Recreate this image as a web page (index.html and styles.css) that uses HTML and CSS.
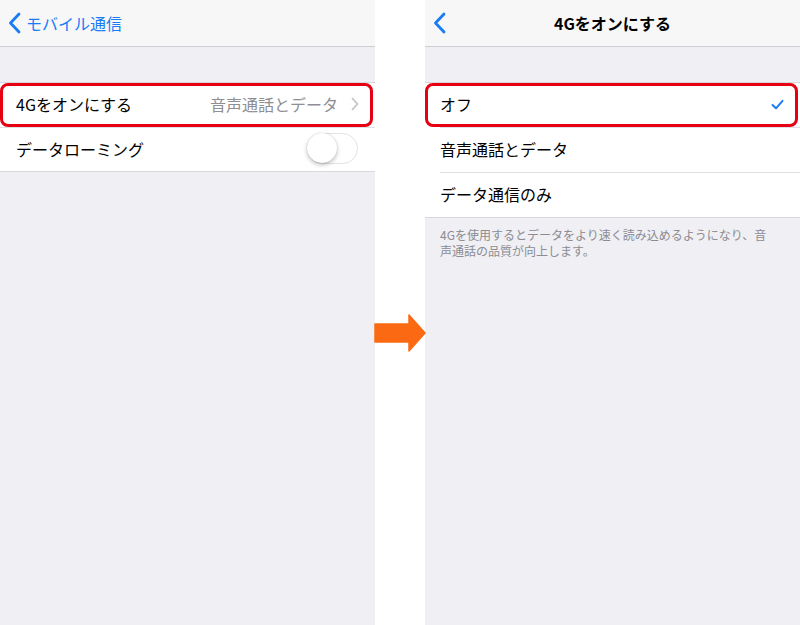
FILE: index.html
```html
<!DOCTYPE html>
<html lang="ja">
<head>
<meta charset="utf-8">
<link rel="stylesheet" href="styles.css">
</head>
<body>
<div class="stage">
  <section class="panel">
    <header class="nav">
      <div class="back">
        <svg class="back-chev" width="13" height="22" viewBox="0 0 13 22"><path d="M11 2 L2.5 11 L11 20" fill="none" stroke="#1a7cf4" stroke-width="2.8" stroke-linecap="round" stroke-linejoin="round"/></svg>
        <span>モバイル通信</span>
      </div>
    </header>
    <div class="group">
      <div class="row hl">
        <span class="label">4Gをオンにする</span>
        <span class="detail">音声通話とデータ</span>
        <svg class="chev" width="8" height="14" viewBox="0 0 8 14"><path d="M1.5 1.5 L6.5 7 L1.5 12.5" fill="none" stroke="#c4c4c9" stroke-width="1.8" stroke-linecap="round" stroke-linejoin="round"/></svg>
      </div>
      <div class="row">
        <span class="label">データローミング</span>
        <span class="toggle"><span class="knob"></span></span>
      </div>
    </div>
  </section>
  <div class="spacer"></div>
  <section class="panel">
    <header class="nav">
      <svg class="back-chev solo" width="13" height="22" viewBox="0 0 13 22"><path d="M11 2 L2.5 11 L11 20" fill="none" stroke="#1a7cf4" stroke-width="2.8" stroke-linecap="round" stroke-linejoin="round"/></svg>
      <h1 class="title">4Gをオンにする</h1>
    </header>
    <div class="group">
      <div class="row hl inset">
        <span class="label">オフ</span>
        <svg class="check" width="13" height="11" viewBox="0 0 13 11"><path d="M1.5 6 L5 9.3 L11.5 1.8" fill="none" stroke="#1a7cf4" stroke-width="2" stroke-linecap="round" stroke-linejoin="round"/></svg>
      </div>
      <div class="row inset sep">
        <span class="label">音声通話とデータ</span>
      </div>
      <div class="row inset sep">
        <span class="label">データ通信のみ</span>
      </div>
    </div>
    <p class="footer">4Gを使用するとデータをより速く読み込めるようになり、音声通話の品質が向上します。</p>
  </section>
  <svg class="arrow" width="52" height="40" viewBox="0 0 52 40"><path d="M1 11 H35 V2 L51 20 L35 38 V29 H1 Z" fill="#fb6a12" stroke="#fb6a12" stroke-width="1.5" stroke-linejoin="round"/></svg>
</div>
</body>
</html>
```
FILE: styles.css
```css
* { box-sizing: border-box; margin: 0; padding: 0; }
html, body { background: #fff; }
body {
  font-family: "Noto Sans CJK JP", "Noto Sans", sans-serif;
  color: #000;
}
.stage {
  position: relative;
  width: 800px;
  height: 625px;
  display: flex;
  overflow: hidden;
}
.panel {
  width: 375px;
  height: 625px;
  background: #efeff4;
  display: flex;
  flex-direction: column;
}
.spacer { width: 50px; background: #fff; }
.nav {
  position: relative;
  height: 47px;
  background: #f7f7f8;
  border-bottom: 1px solid #cfcfd3;
  display: flex;
  align-items: center;
  padding-left: 8px;
}
.back {
  display: flex;
  align-items: center;
  gap: 5px;
  color: #1a7cf4;
  font-size: 16px;
}
.back-chev { flex: none; }
.title {
  position: absolute;
  left: 0;
  right: 0;
  text-align: center;
  font-size: 16px;
  font-weight: 700;
}
.group {
  margin-top: 35px;
  background: #fff;
  border-top: 1px solid #d8d8dc;
  border-bottom: 1px solid #d8d8dc;
}
.row {
  position: relative;
  height: 44px;
  display: flex;
  align-items: center;
  padding: 0 16px 2px;
  font-size: 16px;
}
.row + .row { border-top: 1px solid #e0e0e4; }
.row.inset { padding-left: 15px; }
.row.sep { border-top: none; height: 45px; }
.row.sep::before {
  content: "";
  position: absolute;
  left: 15px;
  right: 0;
  top: 0;
  height: 1px;
  background: #e0e0e4;
}
.label { flex: 1; }
.detail { color: #8e8e93; margin-right: 13px; }
.chev { flex: none; }
.check { flex: none; }
.hl::after {
  content: "";
  position: absolute;
  inset: 0 2px 0 0;
  border: 3px solid #e60012;
  border-radius: 8px;
}
.toggle {
  position: relative;
  width: 51px;
  height: 31px;
  border-radius: 16px;
  border: 1.5px solid #e3e3e7;
  background: #fff;
  margin-right: 1px;
}
.knob {
  position: absolute;
  left: -1px;
  top: -1px;
  width: 30px;
  height: 30px;
  border-radius: 50%;
  background: #fff;
  box-shadow: 0 2px 4px rgba(0,0,0,0.25), 0 0 1px rgba(0,0,0,0.2);
}
.footer {
  padding: 9px 24px 0 15px;
  font-size: 12px;
  line-height: 15.5px;
  color: #8c8c92;
}
.arrow {
  position: absolute;
  left: 374px;
  top: 313px;
}
```
